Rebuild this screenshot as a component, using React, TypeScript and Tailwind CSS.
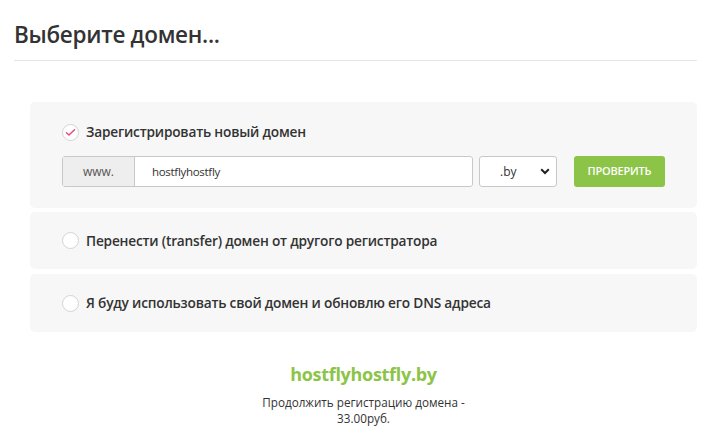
import { useState } from 'react';

const FONT = { fontFamily: '"Open Sans", "Noto Sans", sans-serif' };

type Option = 'register' | 'transfer' | 'own';

function Radio({ checked }: { checked: boolean }) {
  return (
    <span className="flex h-[17px] w-[17px] shrink-0 items-center justify-center rounded-full border border-[#d4d4d4] bg-white">
      {checked && (
        <svg width="11" height="9" viewBox="0 0 11 9" fill="none">
          <path d="M1.5 4.8 L4 7 L9.5 1.8" stroke="#e5487a" strokeWidth="1.5" strokeLinecap="round" strokeLinejoin="round" />
        </svg>
      )}
    </span>
  );
}

export default function App() {
  const [choice, setChoice] = useState<Option>('register');
  const [name, setName] = useState('hostflyhostfly');
  const [zone, setZone] = useState('.by');

  return (
    <div className="min-h-[438px] w-[703px] bg-white text-[#333]" style={FONT}>
      <div className="pl-[14px] pr-[6px] pt-[20px]">
        <h1 className="text-[22.5px] font-semibold leading-[30px] tracking-[-0.3px] text-[#333]">Выберите домен...</h1>
        <div className="mt-[10px] h-px bg-[#e5e5e5]" />
      </div>

      <div className="ml-[30px] mr-[6px] mt-[41px] flex flex-col gap-[4px]">
        {/* Register */}
        <div className="rounded-[5px] bg-[#f7f7f7] px-[32px] pb-[21px] pt-[21px]">
          <label className="flex cursor-pointer items-center gap-[7px]" onClick={() => setChoice('register')}>
            <Radio checked={choice === 'register'} />
            <span className="text-[13.7px] font-semibold leading-[18px] tracking-[-0.2px]">Зарегистрировать новый домен</span>
          </label>
          <div className="mt-[15px] flex items-center">
            <div className="flex h-[31px] w-[411px] rounded-[3px] border border-[#c8c8c8] bg-white">
              <span className="flex w-[72px] items-center justify-center border-r border-[#c8c8c8] bg-[#eeeeee] text-[12px] text-[#555]">www.</span>
              <input
                value={name}
                onChange={(e) => setName(e.target.value)}
                className="min-w-0 flex-1 rounded-r-[3px] bg-white px-[17px] text-[11.5px] tracking-[-0.3px] text-[#333] outline-none"
              />
            </div>
            <div className="relative ml-[6px] h-[31px] w-[78px]">
              <select
                value={zone}
                onChange={(e) => setZone(e.target.value)}
                className="h-full w-full appearance-none rounded-[3px] border border-[#c8c8c8] bg-white pl-[20px] text-[12px] text-[#333] outline-none"
              >
                <option>.by</option>
                <option>.бел</option>
                <option>.com</option>
              </select>
              <svg className="pointer-events-none absolute right-[7px] top-[12px]" width="10" height="7" viewBox="0 0 10 7">
                <path d="M1.2 1.2 L5 5 L8.8 1.2" stroke="#222" strokeWidth="2" fill="none" />
              </svg>
            </div>
            <button className="ml-[17px] h-[31px] w-[91px] rounded-[3px] bg-[#8cc447] text-[11px] font-semibold tracking-[-0.2px] text-white">
              ПРОВЕРИТЬ
            </button>
          </div>
        </div>

        {/* Transfer */}
        <label
          className="flex h-[57px] cursor-pointer items-center gap-[7px] rounded-[5px] bg-[#f7f7f7] px-[32px]"
          onClick={() => setChoice('transfer')}
        >
          <Radio checked={choice === 'transfer'} />
          <span className="text-[13.7px] font-semibold leading-[18px] tracking-[-0.2px]">Перенести (transfer) домен от другого регистратора</span>
        </label>

        {/* Own DNS */}
        <label
          className="mt-[1px] flex h-[58px] cursor-pointer items-center gap-[7px] rounded-[5px] bg-[#f7f7f7] px-[32px]"
          onClick={() => setChoice('own')}
        >
          <Radio checked={choice === 'own'} />
          <span className="text-[13.7px] font-semibold leading-[18px] tracking-[-0.2px]">Я буду использовать свой домен и обновлю его DNS адреса</span>
        </label>
      </div>

      <div className="ml-[30px] mr-[6px] mt-[30px] flex flex-col items-center text-center">
        <p className="text-[18px] font-bold leading-[24px] tracking-[-0.3px] text-[#8cc447]">hostflyhostfly.by</p>
        <p className="mt-[8px] text-[11.7px] leading-[16px] text-[#333]">
          Продолжить регистрацию домена -
          <br />
          33.00руб.
        </p>
      </div>
    </div>
  );
}
